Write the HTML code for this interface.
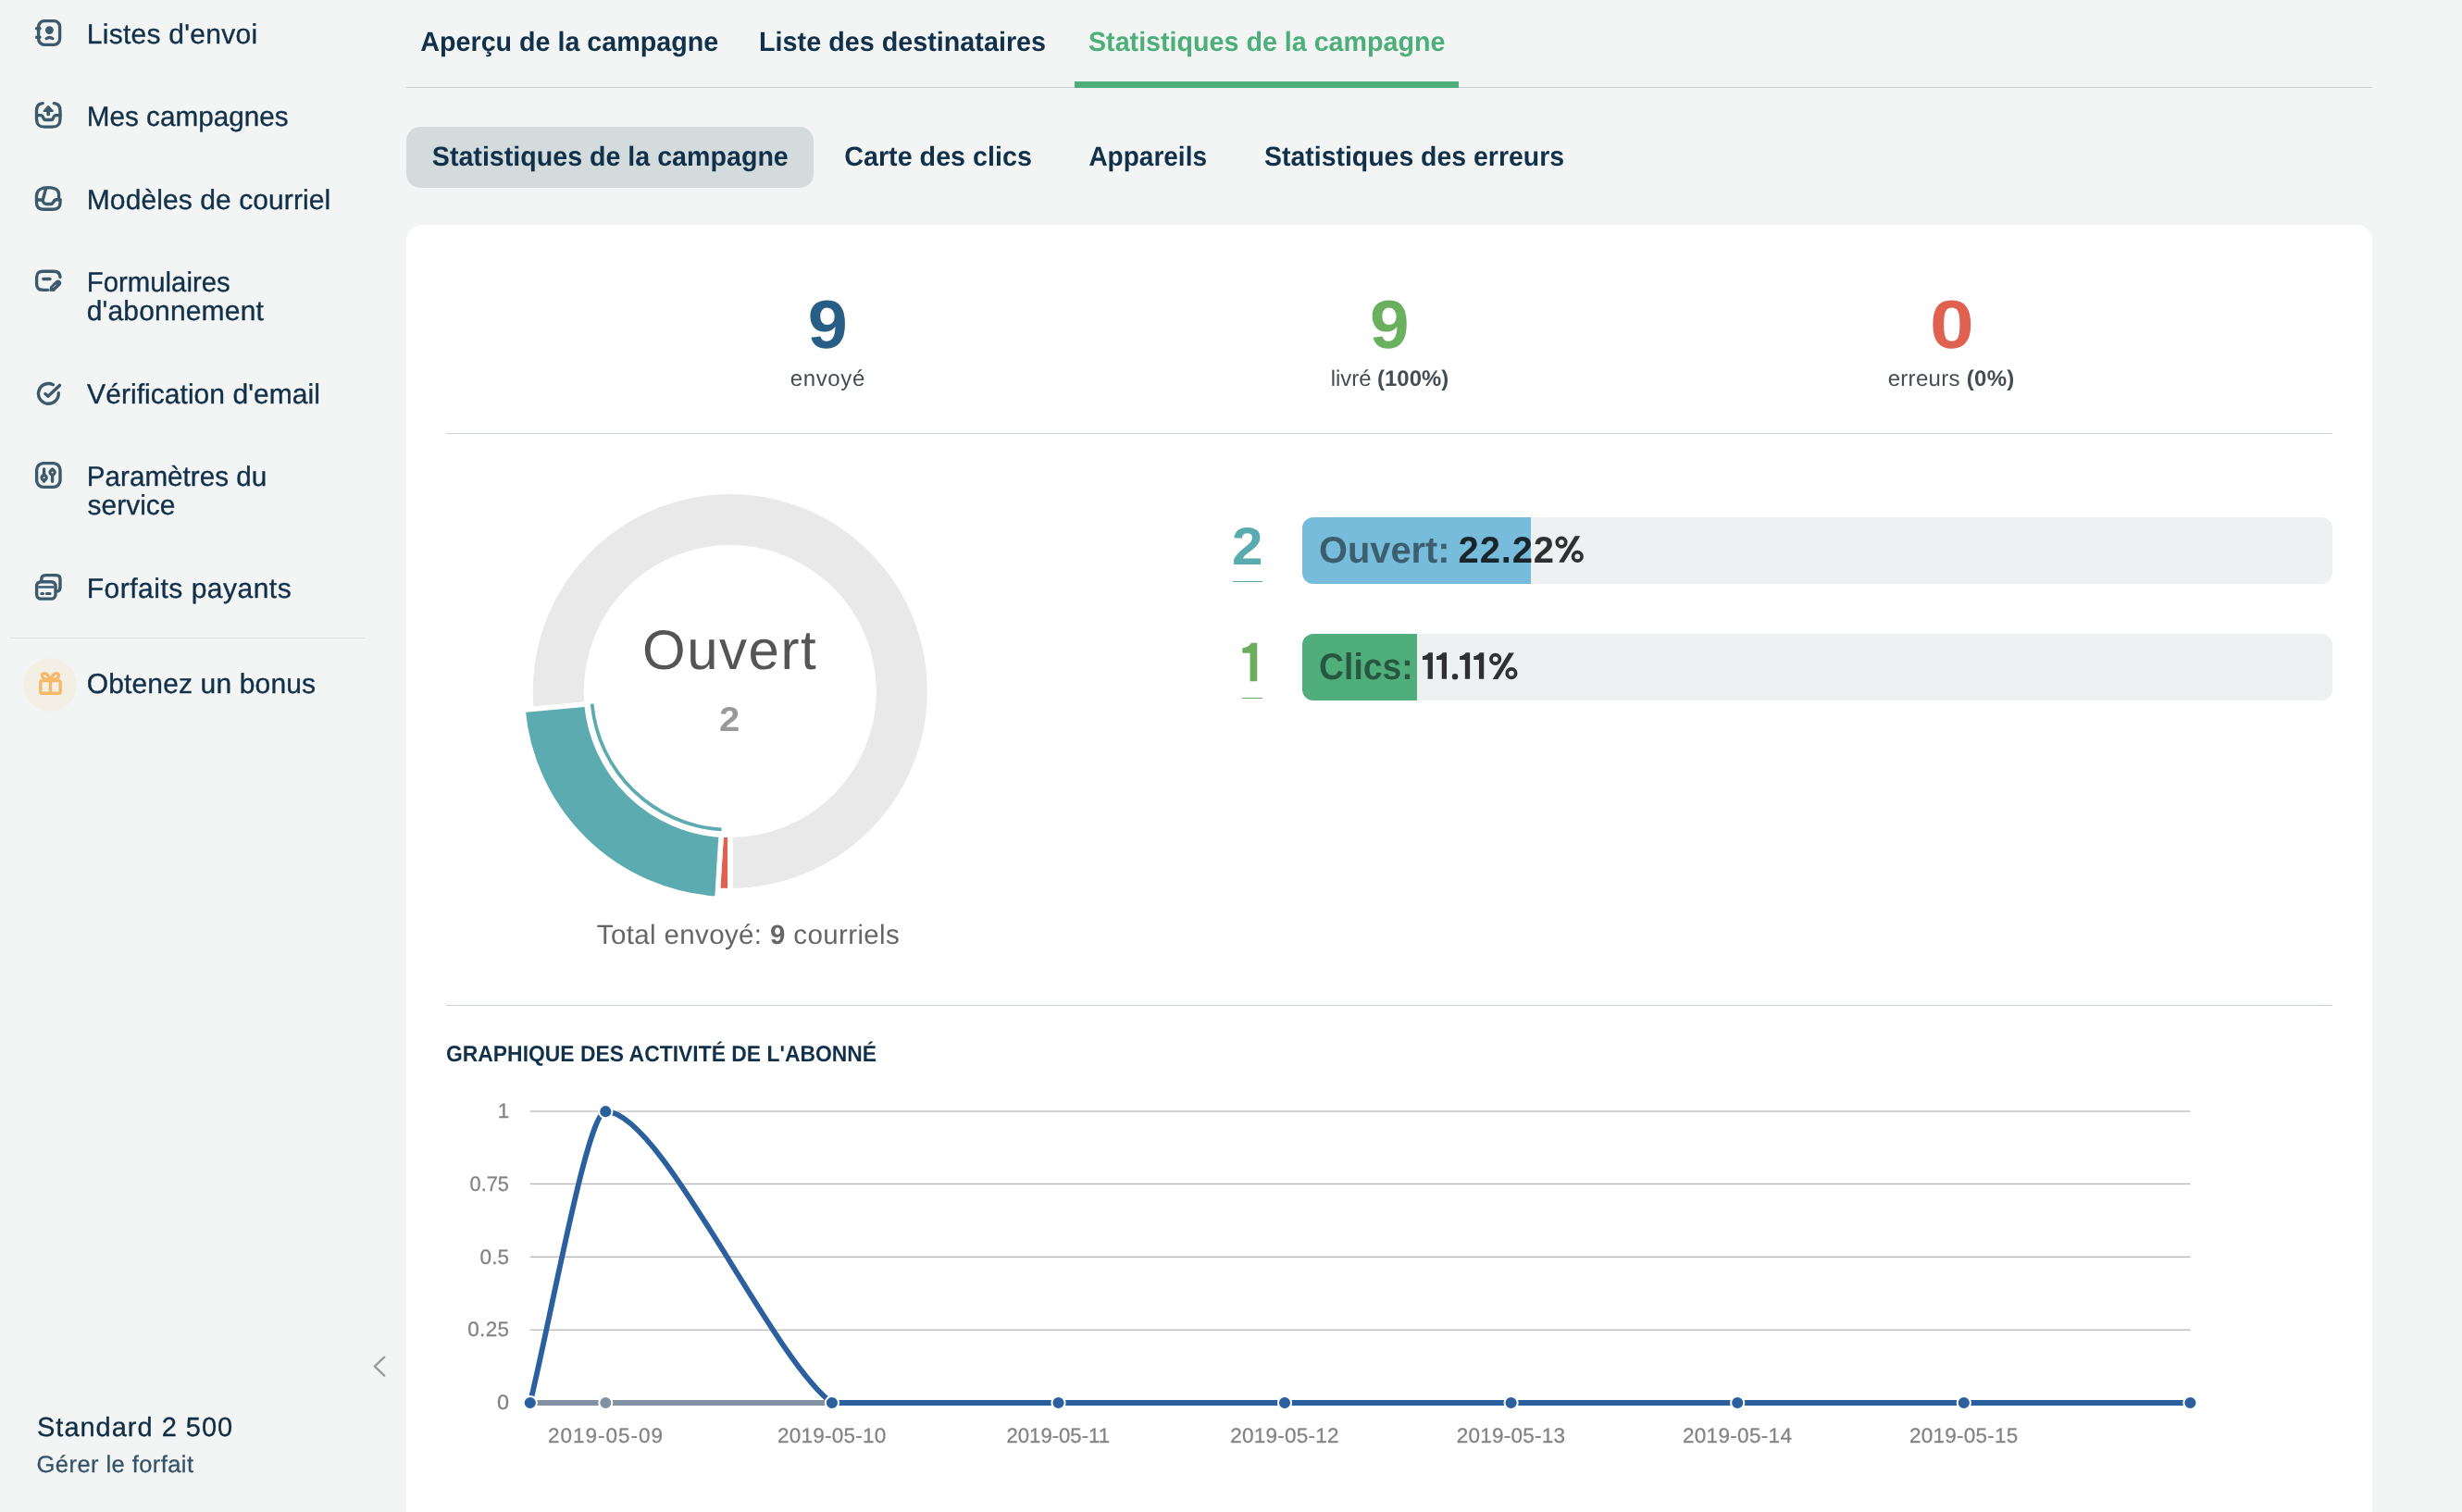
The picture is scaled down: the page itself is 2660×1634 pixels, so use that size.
<!DOCTYPE html>
<html lang="fr"><head><meta charset="utf-8"><title>Statistiques de la campagne</title>
<style>
html,body{margin:0;padding:0;}
body{width:2660px;height:1634px;background:#f3f5f5;font-family:"Liberation Sans",sans-serif;}
#page{position:relative;width:2660px;height:1634px;overflow:hidden;background:#f3f5f5;}
.a{position:absolute;}
svg{position:absolute;left:0;top:0;overflow:visible;will-change:transform;}
</style></head><body><div id="page">
<!-- tabs line + active underline -->
<div class="a" style="left:439px;top:94px;width:2124px;height:1px;background:#c9d1d4"></div>
<div class="a" style="left:1161px;top:88px;width:415px;height:7px;background:#4eae7b"></div>
<!-- sub tab pill -->
<div class="a" style="left:439px;top:137.3px;width:440px;height:65.4px;border-radius:15px;background:#d3dbdd"></div>
<!-- card -->
<div class="a" style="left:439px;top:243px;width:2124px;height:1391px;border-radius:17px 17px 0 0;background:#fff"></div>
<div class="a" style="left:482px;top:468px;width:2038px;height:1px;background:#cdd5d7"></div>
<div class="a" style="left:482px;top:1086px;width:2038px;height:1px;background:#cdd5d7"></div>
<!-- sidebar separator -->
<div class="a" style="left:11px;top:689px;width:383px;height:1px;background:#dce1e3"></div>
<!-- bars -->
<div class="a" style="left:1406.7px;top:558.8px;width:1113px;height:71.8px;border-radius:12px;background:#edf1f2;overflow:hidden"><div style="width:247.3px;height:100%;background:#78bcdc"></div></div>
<div class="a" style="left:1406.7px;top:685px;width:1113px;height:71.8px;border-radius:12px;background:#edf1f2;overflow:hidden"><div style="width:124.4px;height:100%;background:#4fae7c"></div></div>
<div class="a" style="left:1332px;top:628px;width:32px;height:1px;background:#5aabb0"></div>
<div class="a" style="left:1342px;top:754px;width:22px;height:1px;background:#6aad5f"></div>
<svg width="2660" height="1634" viewBox="0 0 2660 1634">

<g fill="none" stroke="#3d5a6c" stroke-width="3.4" stroke-linecap="round" stroke-linejoin="round">
<!-- 1 contacts -->
<rect x="41.6" y="22.6" width="23" height="25.8" rx="6.3"/>
<path d="M39.6,30.8H43M39.6,40.3H43"/>
<circle cx="53.4" cy="32.6" r="4.4" fill="#3d5a6c" stroke="none"/>
<path d="M50,41.7Q53.5,39.3 57,41.7" stroke-width="3.2"/>
<!-- 2 outbox -->
<path d="M46.2,111.6C41.5,111.6 39.5,114.5 39.5,120V128.6C39.5,134.6 42,137.1 48,137.1H56.5C62.5,137.1 65,134.6 65,128.6V120C65,114.5 63,111.6 58.3,111.6"/>
<path d="M39.5,124.6H44.5C47,124.6 46.5,129.5 49,129.5H55.5C58,129.5 57.5,124.6 60,124.6H65"/>
<path d="M52.2,115L56.8,119.9H47.6Z" fill="#3d5a6c" stroke-width="2"/>
<path d="M52.2,120V123.4" stroke-width="3.8"/>
<!-- 3 templates -->
<path d="M39.5,216V219.3C39.5,224.3 42,226.3 48,226.3H56.5C62.5,226.3 65,224.3 65,219.3V216"/>
<path d="M39.5,216H44C47,216 46.5,220.5 49.5,220.5H55C58,220.5 57.5,215.8 61,215.8H65"/>
<path d="M39.5,217V211.5C39.5,205.5 45,202.6 52,202.6C59,202.8 63.6,204.8 63.6,210L63.4,215.5"/>
<path d="M49.6,203.6L46.3,216"/>
<!-- 4 forms -->
<path d="M51.4,313.4H46.6C41.6,313.4 39.6,311.4 39.6,306.4V300.2C39.6,295.2 41.6,293.2 46.6,293.2H58C63,293.2 65,295.2 65,299.6"/>
<path d="M46.9,301.5H54"/>
<path d="M57.3,311.4L62.7,306" stroke-width="6.8"/>
<path d="M54.3,314L55.2,310.2L58.2,313.2Z" fill="#3d5a6c" stroke-width="2"/>
<path d="M57.6,310.6L60.2,308.1" stroke="#f3f5f5" stroke-width="0.8"/>
<!-- 5 verification -->
<path d="M57.35,415.69A10.9,10.9 0 1 0 63.28,424.72"/>
<path d="M48.9,425.6L51.9,428.3L64.5,416.4"/>
<!-- 6 settings -->
<rect x="39.6" y="500.6" width="25.4" height="25.8" rx="7.3"/>
<path d="M47.6,506.9V520.2M56.6,506.9V520.2"/>
<circle cx="47.6" cy="516.2" r="2.6" fill="#f3f5f5" stroke-width="3.2"/>
<circle cx="56.6" cy="510.4" r="2.6" fill="#f3f5f5" stroke-width="3.2"/>
<!-- 7 plans -->
<path d="M44.8,627V626Q44.8,621.6 49.2,621.6H60.6Q65,621.6 65,626V634.6Q65,639 61.6,639"/>
<rect x="39.6" y="628.7" width="20.4" height="18.4" rx="4.6"/>
<rect x="41.3" y="633.2" width="17" height="2.5" fill="#3d5a6c" stroke="none"/>
<path d="M44.8,641.5H46.6M50.3,641.5H54.1" stroke-width="3"/>
</g>
<!-- gift -->
<circle cx="54" cy="740" r="28.8" fill="#f4efe5"/>
<g fill="none" stroke="#f4b96a" stroke-width="3.4" stroke-linejoin="round">
<rect x="43.8" y="735.6" width="21.4" height="13.7" rx="1.8"/>
<path d="M54.5,735V749.3"/>
<path d="M54.5,734.6C52.8,729.6 49.6,726.9 47.2,727.8C44.7,728.8 45.1,732.2 47.9,733.5C49.9,734.4 52.2,734.6 54.5,734.6Z"/>
<path d="M54.5,734.6C56.2,729.6 59.4,726.9 61.8,727.8C64.3,728.8 63.9,732.2 61.1,733.5C59.1,734.4 56.8,734.6 54.5,734.6Z"/>
</g>
<!-- chevron -->
<path d="M415.2,1466.6L404.8,1476.6L415.2,1486.6" fill="none" stroke="#9a9a9a" stroke-width="2.3" stroke-linecap="round" stroke-linejoin="round"/>

<path d="M573.94,766.55 A215.75,215.75 0 1 1 788.80,962.75 L788.80,902.25 A155.25,155.25 0 1 0 634.19,761.07 Z" fill="#e9e9e9" stroke="#fff" stroke-width="5.5" stroke-linejoin="miter"/>
<path d="M788.80,962.75 A215.75,215.75 0 0 1 775.48,962.34 L779.21,901.95 A155.25,155.25 0 0 0 788.80,902.25 Z" fill="#e06152" stroke="#fff" stroke-width="5.5"/>
<path d="M774.92,971.32 A224.75,224.75 0 0 1 564.97,767.37 L633.94,761.09 A155.5,155.5 0 0 0 779.20,902.20 Z" fill="#5cabb0" stroke="#fff" stroke-width="5.5"/>
<path d="M779.44,898.31 A151.6,151.6 0 0 1 637.82,760.74 L641.51,760.40 A147.9,147.9 0 0 0 779.67,894.62 Z" fill="#5cabb0"/>
<rect x="572.8" y="1200" width="1793.7" height="2" fill="#d2d2d2"/>
<rect x="572.8" y="1278.8" width="1793.7" height="1.3" fill="#b4b4b4"/>
<rect x="572.8" y="1357.7" width="1793.7" height="1.3" fill="#b4b4b4"/>
<rect x="572.8" y="1436.6" width="1793.7" height="1.3" fill="#b9b9b9"/>
<line x1="572.8" y1="1516" x2="2366.5" y2="1516" stroke="#7f91a3" stroke-width="5.8"/>
<circle cx="654.3" cy="1516" r="7" fill="#7f91a3" stroke="#fff" stroke-width="2"/>
<path d="M572.8,1516 C597.7,1412.3 635,1201.2 654.3,1201.2 C714.9,1201.2 831.6,1466.2 898.9,1516 L2366.4,1516" fill="none" stroke="#2b5f9e" stroke-width="5.8" stroke-linejoin="round"/>
<circle cx="572.8" cy="1516" r="7.1" fill="#2b5f9e" stroke="#fff" stroke-width="2"/>
<circle cx="654.3" cy="1201.2" r="7.1" fill="#2b5f9e" stroke="#fff" stroke-width="2"/>
<circle cx="898.9" cy="1516" r="7.1" fill="#2b5f9e" stroke="#fff" stroke-width="2"/>
<circle cx="1143.5" cy="1516" r="7.1" fill="#2b5f9e" stroke="#fff" stroke-width="2"/>
<circle cx="1388.0" cy="1516" r="7.1" fill="#2b5f9e" stroke="#fff" stroke-width="2"/>
<circle cx="1632.6" cy="1516" r="7.1" fill="#2b5f9e" stroke="#fff" stroke-width="2"/>
<circle cx="1877.2" cy="1516" r="7.1" fill="#2b5f9e" stroke="#fff" stroke-width="2"/>
<circle cx="2121.8" cy="1516" r="7.1" fill="#2b5f9e" stroke="#fff" stroke-width="2"/>
<circle cx="2366.4" cy="1516" r="7.1" fill="#2b5f9e" stroke="#fff" stroke-width="2"/>
<path d="M1358.25,694.70L1358.25,736.20L1350.57,736.20L1350.57,705.84L1342.30,705.84L1342.30,700.47Q1349.21,699.30 1351.89,694.70Z" fill="#6aad5f"/>
<path d="M1547.92,705.30L1547.92,733.87L1542.63,733.87L1542.63,712.97L1536.94,712.97L1536.94,709.27Q1541.70,708.47 1543.54,705.30Z" fill="rgba(0,0,0,0.8)"/>
<path d="M1563.03,705.30L1563.03,733.87L1557.74,733.87L1557.74,712.97L1552.05,712.97L1552.05,709.27Q1556.81,708.47 1558.65,705.30Z" fill="rgba(0,0,0,0.8)"/>
<path d="M1588.12,705.30L1588.12,733.87L1582.83,733.87L1582.83,712.97L1577.14,712.97L1577.14,709.27Q1581.90,708.47 1583.74,705.30Z" fill="rgba(0,0,0,0.8)"/>
<path d="M1603.23,705.30L1603.23,733.87L1597.94,733.87L1597.94,712.97L1592.25,712.97L1592.25,709.27Q1597.01,708.47 1598.85,705.30Z" fill="rgba(0,0,0,0.8)"/>
<circle cx="1572.03" cy="731.2" r="3.2" fill="rgba(0,0,0,0.8)"/>
<g fill="none" stroke="rgba(0,0,0,0.8)" stroke-width="3.66"><circle cx="1615.64" cy="712.30" r="4.75"/><circle cx="1632.94" cy="727.65" r="4.75"/></g>
<path d="M1630.26,705.48L1635.87,705.48L1618.32,733.99L1612.72,733.99Z" fill="rgba(0,0,0,0.8)"/>
<g fill="none" stroke="rgba(0,0,0,0.8)" stroke-width="3.66"><circle cx="1687.00" cy="586.10" r="4.75"/><circle cx="1704.30" cy="601.45" r="4.75"/></g>
<path d="M1701.62,579.28L1707.23,579.28L1689.68,607.79L1684.08,607.79Z" fill="rgba(0,0,0,0.8)"/>
<g font-family="Liberation Sans, sans-serif" text-rendering="geometricPrecision" style="white-space:pre">
<text font-size="30" fill="#11304a" stroke="#11304a" stroke-width="0.35" letter-spacing="0.264" x="93.80" y="47">Listes d'envoi</text>
<text font-size="30" fill="#11304a" stroke="#11304a" stroke-width="0.35" transform="translate(93.82,136) scale(0.9889,1)">Mes campagnes</text>
<text font-size="30" fill="#11304a" stroke="#11304a" stroke-width="0.35" letter-spacing="0.087" x="93.80" y="226">Modèles de courriel</text>
<text font-size="30" fill="#11304a" stroke="#11304a" stroke-width="0.35" transform="translate(93.84,315) scale(0.9777,1)">Formulaires</text>
<text font-size="30" fill="#11304a" stroke="#11304a" stroke-width="0.35" letter-spacing="0.175" x="93.70" y="346">d'abonnement</text>
<text font-size="30" fill="#11304a" stroke="#11304a" stroke-width="0.35" letter-spacing="0.049" x="94.10" y="436">Vérification d'email</text>
<text font-size="30" fill="#11304a" stroke="#11304a" stroke-width="0.35" transform="translate(93.82,525) scale(0.9877,1)">Paramètres du</text>
<text font-size="30" fill="#11304a" stroke="#11304a" stroke-width="0.35" transform="translate(94.60,556) scale(0.9975,1)">service</text>
<text font-size="30" fill="#11304a" stroke="#11304a" stroke-width="0.35" letter-spacing="0.498" x="93.80" y="646">Forfaits payants</text>
<text font-size="30" fill="#11304a" stroke="#11304a" stroke-width="0.35" letter-spacing="0.148" x="93.70" y="749">Obtenez un bonus</text>
<text font-size="29" fill="#0f2d44" stroke="#0f2d44" stroke-width="0.35" letter-spacing="0.992" x="40.00" y="1552">Standard 2 500</text>
<text font-size="25.5" fill="#34536a" stroke="#34536a" stroke-width="0.3" letter-spacing="0.427" x="39.60" y="1591">Gérer le forfait</text>
<text font-size="29.5" fill="#11304a" font-weight="700" transform="translate(454.30,55) scale(0.9720,1)">Aperçu de la campagne</text>
<text font-size="29.5" fill="#11304a" font-weight="700" transform="translate(820.03,55) scale(0.9748,1)">Liste des destinataires</text>
<text font-size="29.5" fill="#4cae79" font-weight="700" transform="translate(1176.00,55) scale(0.9714,1)">Statistiques de la campagne</text>
<text font-size="29.5" fill="#11304a" font-weight="700" transform="translate(466.80,179) scale(0.9704,1)">Statistiques de la campagne</text>
<text font-size="29.5" fill="#11304a" font-weight="700" transform="translate(912.23,179) scale(0.9732,1)">Carte des clics</text>
<text font-size="29.5" fill="#11304a" font-weight="700" transform="translate(1176.40,179) scale(0.9490,1)">Appareils</text>
<text font-size="29.5" fill="#11304a" font-weight="700" transform="translate(1366.00,179) scale(0.9642,1)">Statistiques des erreurs</text>
<text font-size="73.6" fill="#285d86" font-weight="700" transform="translate(872.80,376) scale(1.0514,1)">9</text>
<text font-size="73.6" fill="#6bb05e" font-weight="700" transform="translate(1479.92,376) scale(1.0405,1)">9</text>
<text font-size="73.6" fill="#e0614f" font-weight="700" transform="translate(2084.97,376) scale(1.1667,1)">0</text>
<text font-size="24" fill="#444d52" letter-spacing="0.651" x="853.70" y="417">envoyé</text>
<text font-size="24" fill="#444d52" transform="translate(1437.71,417) scale(0.9949,1)"><tspan>livré </tspan><tspan font-weight="700">(100%)</tspan></text>
<text font-size="24" fill="#444d52" letter-spacing="0.294" x="2039.70" y="417"><tspan>erreurs </tspan><tspan font-weight="700">(0%)</tspan></text>
<text font-size="60" fill="#555555" letter-spacing="1.522" x="694.00" y="723">Ouvert</text>
<text font-size="37.2" fill="#999999" font-weight="700" transform="translate(776.92,790) scale(1.0789,1)">2</text>
<text font-size="29.5" fill="#666666" letter-spacing="0.369" x="644.80" y="1020"><tspan>Total envoyé: </tspan><tspan font-weight="700">9</tspan><tspan> courriels</tspan></text>
<text font-size="57.4" fill="#5aabb0" font-weight="700" transform="translate(1330.95,610) scale(1.0483,1)">2</text>
<text font-size="40" fill="rgba(0,0,0,0.5)" font-weight="700" transform="translate(1425.01,608) scale(0.9947,1)">Ouvert:</text>
<text font-size="40" fill="rgba(0,0,0,0.8)" font-weight="700" letter-spacing="0.812" x="1575.60" y="608">22.22</text>
<text font-size="40" fill="rgba(0,0,0,0.5)" font-weight="700" transform="translate(1425.07,734) scale(0.9340,1)">Clics:</text>
<text font-size="24.4" fill="#11304a" font-weight="700" transform="translate(481.96,1147) scale(0.9389,1)">GRAPHIQUE DES ACTIVITÉ DE L'ABONNÉ</text>
<text font-size="22.5" fill="#838383" stroke="#838383" stroke-width="0.25" x="537.80" y="1208">1</text>
<text font-size="22.5" fill="#838383" stroke="#838383" stroke-width="0.25" transform="translate(507.50,1287) scale(0.9705,1)">0.75</text>
<text font-size="22.5" fill="#838383" stroke="#838383" stroke-width="0.25" letter-spacing="0.118" x="518.50" y="1366">0.5</text>
<text font-size="22.5" fill="#838383" stroke="#838383" stroke-width="0.25" letter-spacing="0.307" x="505.30" y="1444">0.25</text>
<text font-size="22.5" fill="#838383" stroke="#838383" stroke-width="0.25" transform="translate(537.00,1523) scale(1.0417,1)">0</text>
<text font-size="22.5" fill="#838383" stroke="#838383" stroke-width="0.25" letter-spacing="0.991" x="592.05" y="1559">2019-05-09</text>
<text font-size="22.5" fill="#838383" stroke="#838383" stroke-width="0.25" letter-spacing="0.236" x="840.03" y="1559">2019-05-10</text>
<text font-size="22.5" fill="#838383" stroke="#838383" stroke-width="0.25" transform="translate(1087.48,1559) scale(0.9829,1)">2019-05-11</text>
<text font-size="22.5" fill="#838383" stroke="#838383" stroke-width="0.25" letter-spacing="0.236" x="1329.19" y="1559">2019-05-12</text>
<text font-size="22.5" fill="#838383" stroke="#838383" stroke-width="0.25" letter-spacing="0.236" x="1573.77" y="1559">2019-05-13</text>
<text font-size="22.5" fill="#838383" stroke="#838383" stroke-width="0.25" letter-spacing="0.325" x="1817.95" y="1559">2019-05-14</text>
<text font-size="22.5" fill="#838383" stroke="#838383" stroke-width="0.25" letter-spacing="0.236" x="2062.93" y="1559">2019-05-15</text>
</g>
</svg>
</div></body></html>
